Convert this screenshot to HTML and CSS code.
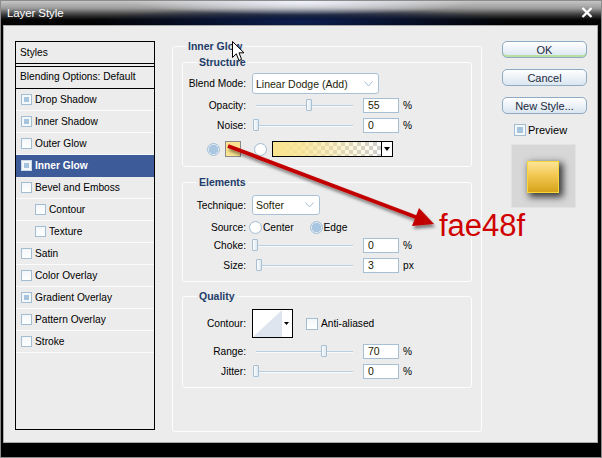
FILE: index.html
```html
<!DOCTYPE html>
<html>
<head>
<meta charset="utf-8">
<title>Layer Style</title>
<link rel="stylesheet" href="styles.css">
</head>
<body>
<div class="window">
  <div class="titlebar">
    <span class="title">Layer Style</span>
    <svg class="close" width="12" height="11" viewBox="0 0 12 11"><path d="M1.5 1 L10.5 10 M10.5 1 L1.5 10" stroke="#fff" stroke-width="2.4" fill="none"/></svg>
  </div>
  <div class="client">
    <div class="styles-panel">
      <div class="panel-head">Styles</div>
      <div class="panel-blend">Blending Options: Default</div>
      <ul class="fx-list">
        <li class="fx"><span class="cb on"></span>Drop Shadow</li>
        <li class="fx"><span class="cb on"></span>Inner Shadow</li>
        <li class="fx"><span class="cb"></span>Outer Glow</li>
        <li class="fx selected"><span class="cb on"></span>Inner Glow</li>
        <li class="fx"><span class="cb"></span>Bevel and Emboss</li>
        <li class="fx sub"><span class="cb"></span>Contour</li>
        <li class="fx sub"><span class="cb"></span>Texture</li>
        <li class="fx"><span class="cb"></span>Satin</li>
        <li class="fx"><span class="cb"></span>Color Overlay</li>
        <li class="fx"><span class="cb on"></span>Gradient Overlay</li>
        <li class="fx"><span class="cb"></span>Pattern Overlay</li>
        <li class="fx"><span class="cb"></span>Stroke</li>
      </ul>
    </div>

    <fieldset class="group main">
      <legend>Inner Glow</legend>

      <fieldset class="group sub-group structure">
        <legend>Structure</legend>
        <div class="row r-blend">
          <span class="lbl">Blend Mode:</span>
          <div class="select w-blend"><span>Linear Dodge (Add)</span><svg class="chev" width="9" height="6" viewBox="0 0 9 6"><path d="M0.5 0.5 L4.5 5 L8.5 0.5" stroke="#a7bfd4" fill="none"/></svg></div>
        </div>
        <div class="row r-slider first">
          <span class="lbl">Opacity:</span>
          <div class="slider"><span class="thumb" style="left:54px"></span></div>
          <div class="num">55</div><span class="unit">%</span>
        </div>
        <div class="row r-slider">
          <span class="lbl">Noise:</span>
          <div class="slider"><span class="thumb" style="left:1px"></span></div>
          <div class="num">0</div><span class="unit">%</span>
        </div>
        <div class="row r-color">
          <span class="radio on"></span>
          <span class="swatch"></span>
          <span class="radio r2"></span>
          <span class="gradient"><span class="grad-fill"></span><span class="grad-btn"><svg width="6" height="4" viewBox="0 0 6 4"><path d="M0 0 L6 0 L3 4 Z" fill="#000"/></svg></span></span>
        </div>
      </fieldset>

      <fieldset class="group sub-group elements">
        <legend>Elements</legend>
        <div class="row r-tech">
          <span class="lbl">Technique:</span>
          <div class="select w-tech"><span>Softer</span><svg class="chev" width="9" height="6" viewBox="0 0 9 6"><path d="M0.5 0.5 L4.5 5 L8.5 0.5" stroke="#a7bfd4" fill="none"/></svg></div>
        </div>
        <div class="row r-source">
          <span class="lbl">Source:</span>
          <span class="radio src"></span><span class="opt">Center</span>
          <span class="radio on edge"></span><span class="opt">Edge</span>
        </div>
        <div class="row r-slider first">
          <span class="lbl">Choke:</span>
          <div class="slider"><span class="thumb" style="left:0px"></span></div>
          <div class="num">0</div><span class="unit">%</span>
        </div>
        <div class="row r-slider">
          <span class="lbl">Size:</span>
          <div class="slider"><span class="thumb" style="left:4px"></span></div>
          <div class="num">3</div><span class="unit">px</span>
        </div>
      </fieldset>

      <fieldset class="group sub-group quality">
        <legend>Quality</legend>
        <div class="row r-contour">
          <span class="lbl">Contour:</span>
          <span class="contour"><svg width="39" height="27" viewBox="0 0 39 27"><rect x="0" y="0" width="39" height="27" fill="#fff"/><path d="M0 27 L29 0 L29 27 Z" fill="#dfe5ee"/><path d="M31 12 L36 12 L33.5 15 Z" fill="#000"/></svg></span>
          <span class="cb aa"></span><span class="opt">Anti-aliased</span>
        </div>
        <div class="row r-slider range">
          <span class="lbl">Range:</span>
          <div class="slider"><span class="thumb" style="left:69px"></span></div>
          <div class="num">70</div><span class="unit">%</span>
        </div>
        <div class="row r-slider">
          <span class="lbl">Jitter:</span>
          <div class="slider"><span class="thumb" style="left:1px"></span></div>
          <div class="num">0</div><span class="unit">%</span>
        </div>
      </fieldset>
    </fieldset>

    <div class="side">
      <div class="btn default">OK</div>
      <div class="btn">Cancel</div>
      <div class="btn">New Style...</div>
      <div class="preview-row"><span class="cb on pv"></span><span>Preview</span></div>
      <div class="preview-box"><span class="preview-swatch"></span></div>
    </div>
  </div>
</div>

<svg class="annot" width="602" height="458" viewBox="0 0 602 458">
  <defs>
    <filter id="sh" x="-10%" y="-10%" width="120%" height="140%">
      <feDropShadow dx="1.5" dy="3" stdDeviation="1.5" flood-color="#000" flood-opacity="0.45"/>
    </filter>
  </defs>
  <g filter="url(#sh)">
    <line x1="228" y1="146" x2="417" y2="217.5" stroke="#c20000" stroke-width="4"/>
    <path d="M434 224 L412 226 L419 208 Z" fill="#c20000"/>
  </g>
</svg>
<div class="hex">fae48f</div>
<svg class="cursor" width="13" height="21" viewBox="0 0 13 21"><path d="M0.5 0.5 L0.5 16.5 L4.3 12.8 L7 19.5 L9.6 18.4 L7 11.8 L12 11.8 Z" fill="#fff" stroke="#000" stroke-width="1" stroke-linejoin="miter"/></svg>
</body>
</html>
```

FILE: styles.css
```css
* { box-sizing: border-box; }
html, body { margin: 0; padding: 0; }
body {
  width: 602px;
  height: 458px;
  overflow: hidden;
  position: relative;
  background: #000;
  font-family: "Liberation Sans", Arial, sans-serif;
  font-size: 10.2px;
  color: #000;
}

.window {
  width: 602px;
  height: 458px;
  border: 1px solid #8c8c8c;
  background: #000;
  display: flex;
  flex-direction: column;
}

.titlebar {
  flex: none;
  height: 24px;
  display: flex;
  align-items: center;
  justify-content: space-between;
  padding: 0 8px 1px 6px;
  background:
    radial-gradient(ellipse 170px 13px at 50% 1px, rgba(242,244,255,0.95), rgba(242,244,255,0)),
    radial-gradient(ellipse 210px 15px at 50% 21px, rgba(12,30,82,1), rgba(12,30,82,0)),
    linear-gradient(#c6c6c6, #9c9c9c 30%, #383838 58%, #050505 78%, #000);
}
.title {
  color: #fff;
  font-size: 11.5px;
  letter-spacing: -0.1px;
}
.close { display: block; }

.client {
  flex: none;
  height: 418px;
  margin: 0 3px 0 2px;
  border: 1px solid #a9a9a9;
  background: #ececec;
  display: flex;
  align-items: flex-start;
  padding: 15px 0 0 11px;
}

/* Styles list */
.styles-panel {
  flex: none;
  width: 140px;
  height: 389px;
  border: 1px solid #000;
}
.panel-head {
  height: 22px;
  line-height: 21px;
  padding-left: 4px;
  border-bottom: 1px solid #000;
}
.panel-blend {
  margin-top: 2px;
  height: 23px;
  line-height: 20px;
  padding-left: 4px;
  border-top: 1px solid #000;
  border-bottom: 1px solid #000;
}
.fx-list { list-style: none; margin: 0; padding: 0; }
.fx {
  height: 22px;
  border-bottom: 1px solid #fbfbfb;
  display: flex;
  align-items: center;
  padding-left: 5px;
  padding-bottom: 1px;
}
.fx.sub { padding-left: 19px; }
.fx.selected {
  background: #3d5a99;
  color: #fff;
  font-weight: bold;
  border-bottom-color: #3d5a99;
}

.cb {
  flex: none;
  width: 11px;
  height: 11px;
  border: 1px solid #a3bdd3;
  background: linear-gradient(#f3f6f9, #ffffff);
  margin-right: 3px;
}
.cb.on {
  background: #a6c4de;
  box-shadow: inset 0 0 0 2px #f4f8fb;
}
.fx.selected .cb { border-color: #c8d8e8; }

/* group boxes */
.group {
  margin: 0;
  min-width: 0;
  border: 1px solid #fbfdfe;
  border-radius: 3px;
}
.group > legend {
  font-weight: bold;
  color: #1f3d6a;
  line-height: 12px;
  padding: 0 2px;
  font-size: 10.5px;
}
.main {
  flex: none;
  width: 310px;
  height: 392px;
  margin-left: 17px;
  margin-top: -1px;
  padding: 4px 9px 0 9px;
}
.main > legend { margin-left: 4px; }
.sub-group {
  width: 290px;
  padding: 0;
}
.sub-group > legend { margin-left: 14px; }
.structure { padding-bottom: 9px; }
.elements { margin-top: 9px; padding-bottom: 8px; }
.quality { margin-top: 8px; padding-bottom: 8px; }

.row { display: flex; align-items: center; }
.lbl {
  flex: none;
  width: 63px;
  margin-right: 6px;
  text-align: right;
}

.r-blend { margin-top: 5px; height: 21px; }
.r-slider { margin-top: 5px; height: 15px; }
.r-slider.first { margin-top: 4px; }
.r-slider.range { margin-top: 6px; }
.r-color { margin-top: 8px; height: 16px; padding-left: 24px; }
.r-tech { margin-top: 7px; height: 20px; }
.r-source { margin-top: 6px; height: 13px; }
.r-contour { margin-top: 7px; height: 29px; }

.select {
  flex: none;
  height: 21px;
  border: 1px solid #a9c1d6;
  border-radius: 3px;
  background: #fff;
  display: flex;
  align-items: center;
  justify-content: space-between;
  padding: 0 5px 0 3px;
  color: #1e1e0a;
  font-size: 10.5px;
}
.w-blend { width: 127px; }
.w-tech { width: 68px; height: 20px; }
.chev { display: block; }

.slider {
  flex: none;
  position: relative;
  width: 106px;
  height: 15px;
}
.slider::before {
  content: "";
  position: absolute;
  left: 4px;
  right: 5px;
  top: 7px;
  height: 1px;
  background: #b8cfe1;
  box-shadow: 0 1px 0 #f8fbfd;
}
.thumb {
  position: absolute;
  top: 1px;
  width: 6px;
  height: 12px;
  border: 1px solid #a9c0d3;
  border-radius: 1px;
  background: linear-gradient(90deg, #fafcfd, #dde8f0);
}
.num {
  flex: none;
  width: 36px;
  height: 15px;
  margin-left: 5px;
  border: 1px solid #a6bfd5;
  background: #fff;
  padding-left: 4px;
  line-height: 13px;
  color: #1c1c00;
  font-size: 10.5px;
}
.unit { margin-left: 4px; }

.radio {
  flex: none;
  width: 13px;
  height: 13px;
  border-radius: 50%;
  border: 1px solid #a3bed5;
  background: radial-gradient(circle at 50% 50%, #ffffff 55%, #eef3f7);
}
.radio.on {
  background: radial-gradient(circle at 50% 50%, #a9c7e0 0 58%, #e3ecf4 64%);
}
.swatch {
  flex: none;
  width: 16px;
  height: 16px;
  margin-left: 5px;
  border: 1px solid #8a8a8a;
  background: #fae48f;
}
.radio.r2 { margin-left: 13px; }
.gradient {
  flex: none;
  display: flex;
  width: 121px;
  height: 16px;
  margin-left: 5px;
  border: 1px solid #000;
}
.grad-fill {
  flex: 1;
  background:
    linear-gradient(90deg, #fae48f 0%, rgba(250,228,143,0.85) 25%, rgba(250,228,143,0) 100%),
    repeating-conic-gradient(#cfcfcf 0 25%, #ffffff 0 50%) 0 0 / 8px 8px;
}
.grad-btn {
  flex: none;
  width: 11px;
  border-left: 1px solid #000;
  background: #fff;
  display: flex;
  align-items: center;
  justify-content: center;
}
.grad-btn svg { display: block; }

.radio.src { margin-left: -3px; }
.opt { margin-left: 1px; }
.radio.edge { margin-left: 16px; }

.contour {
  flex: none;
  width: 41px;
  height: 29px;
  border: 1px solid #000;
}
.contour svg { display: block; }
.cb.aa { width: 12px; height: 12px; margin-left: 13px; margin-right: 2px; }

/* right column */
.side {
  flex: none;
  width: 85px;
  margin-left: 20px;
  display: flex;
  flex-direction: column;
}
.btn {
  height: 17px;
  border: 1px solid #8eabc3;
  border-radius: 5px;
  background: linear-gradient(#ffffff, #eef3f8 45%, #dae6f0);
  display: flex;
  align-items: center;
  justify-content: center;
  font-size: 11px;
  color: #1c2a3c;
}
.btn + .btn { margin-top: 11px; }
.btn.default { box-shadow: inset 0 -2px 0 #b8dea2; }
.preview-row {
  margin-top: 10px;
  padding-left: 12px;
  display: flex;
  align-items: center;
  height: 12px;
  font-size: 11px;
}
.cb.pv { width: 12px; height: 12px; margin-right: 2px; }
.preview-box {
  margin-top: 8px;
  margin-left: 9px;
  width: 65px;
  height: 64px;
  background: #d7d7d7;
  border: 1px solid #e3e3e3;
  padding: 16px 0 0 15px;
}
.preview-swatch {
  display: block;
  width: 32px;
  height: 32px;
  border: 1px solid #f6d938;
  background: linear-gradient(#fde497, #f2c751 45%, #d6a31b);
  box-shadow: 3px 3px 7px 1px rgba(0,0,0,0.75);
}

/* annotations over the dialog */
.annot {
  position: absolute;
  left: 0;
  top: 0;
  pointer-events: none;
}
.hex {
  position: absolute;
  left: 439px;
  top: 210px;
  font-family: "Liberation Sans", Arial, sans-serif;
  font-size: 31px;
  line-height: 31px;
  color: #d00000;
}
.cursor {
  position: absolute;
  left: 232px;
  top: 41px;
}
```
